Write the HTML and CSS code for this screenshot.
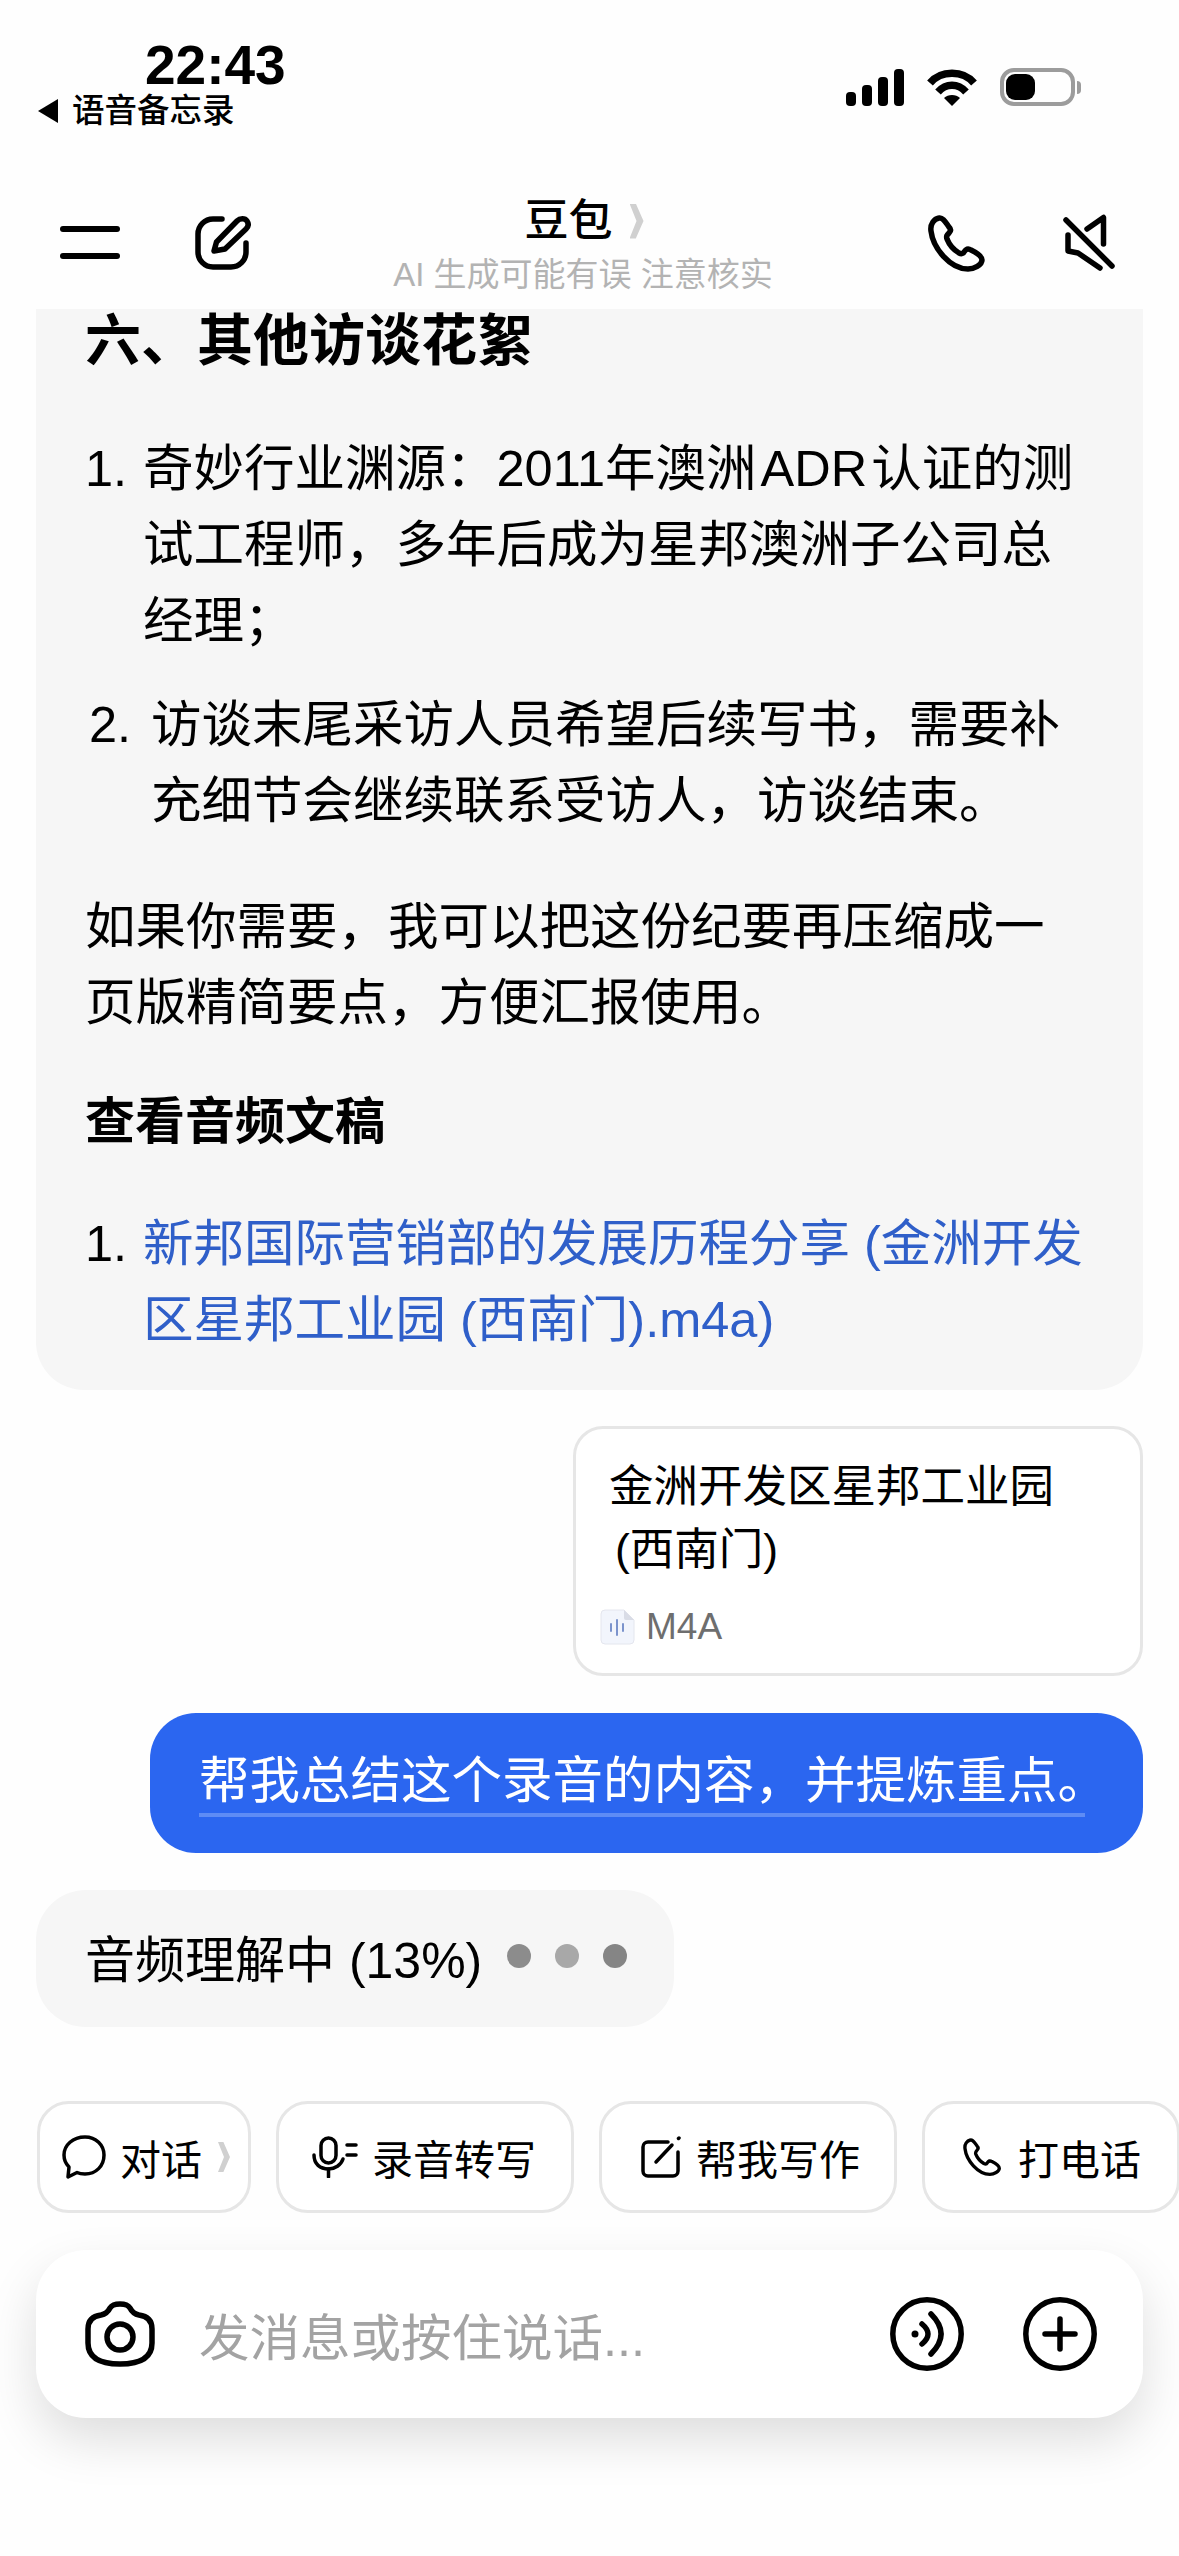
FILE: index.html
```html
<!DOCTYPE html>
<html lang="zh">
<head>
<meta charset="utf-8">
<title>豆包</title>
<link rel="stylesheet" href="styles.css">
</head>
<body>
<div class="app">
  <div class="status">
    <div class="status-left">
      <div class="time">22:43</div>
      <div class="back"><span class="back-tri"></span><span>语音备忘录</span></div>
    </div>
    <div class="status-right">
      <svg class="signal" width="58" height="37" viewBox="0 0 58 37"><rect x="0" y="23" width="10" height="14" rx="4"/><rect x="16" y="16" width="10" height="21" rx="4"/><rect x="32" y="8" width="10" height="29" rx="4"/><rect x="48" y="0" width="10" height="37" rx="4"/></svg>
      <svg class="wifi" width="50" height="37" viewBox="0 0 50 37"><path d="M3 14C14 1 36 1 47 14" fill="none" stroke="#000" stroke-width="7.500"/><path d="M11 23C19 14 31 14 39 23" fill="none" stroke="#000" stroke-width="7.500"/><path d="M25 37L17 29C21 25 29 25 33 29Z"/></svg>
      <div class="battery"><div class="battery-fill"></div></div>
      <div class="battery-nub"></div>
    </div>
  </div>

  <div class="nav">
    <div class="nav-left">
      <div class="menu"><span></span><span></span></div>
      <svg class="edit" width="56" height="54" viewBox="0 0 56 54" fill="none" stroke="#000" stroke-width="5.500" stroke-linejoin="round" stroke-linecap="round"><path d="M27 3H18A15 15 0 0 0 3 18V36A15 15 0 0 0 18 51H36A15 15 0 0 0 51 36V27"/><path d="M19 35L21.500 26L42 5C45 2 50 2 52 5C54 8 53 11 51 13L30 33Z"/></svg>
    </div>
    <div class="nav-center">
      <div class="title"><span>豆包</span><span class="chev"></span></div>
      <div class="sub">AI 生成可能有误 注意核实</div>
    </div>
    <div class="nav-right">
      <svg class="phone" width="58" height="58" viewBox="0 0 58 58" fill="none" stroke="#000" stroke-width="5.500" stroke-linejoin="round"><path d="M11 3C6 4 2 9 3 16C5 33 22 54 40 54C46 54 54 50 54 45C54 41 47 37 43 35C40 33 38 34 36 37C35 39 33 39 31 38C26 35 21 29 19 24C18 21 19 20 21 18C23 16 23 14 21 12C18 8 15 2 11 3Z"/></svg>
      <svg class="mute" width="52" height="58" viewBox="0 0 52 58" fill="none" stroke="#000" stroke-width="5.500" stroke-linejoin="round" stroke-linecap="round"><path d="M24 15L40.500 3.500V30" /><path d="M5 21V37L15 39L37 54"/><path d="M3 6L49 52"/></svg>
    </div>
  </div>

  <div class="thread">
    <div class="answer">
      <h2 class="h-first">六、其他访谈花絮</h2>
      <div class="li li-a"><span class="num">1.</span><p>奇妙行业渊源：2011年澳洲<span class="ltn">ADR</span>认证的测<br>试工程师，多年后成为星邦澳洲子公司总<br>经理；</p></div>
      <div class="li li-b"><span class="num">2.</span><p>访谈末尾采访人员希望后续写书，需要补<br>充细节会继续联系受访人，访谈结束。</p></div>
      <p class="para">如果你需要，我可以把这份纪要再压缩成一<br>页版精简要点，方便汇报使用。</p>
      <h3 class="h-sub">查看音频文稿</h3>
      <div class="li li-c"><span class="num">1.</span><p class="link">新邦国际营销部的发展历程分享 (金洲开发<br>区星邦工业园 (西南门).m4a)</p></div>
    </div>

    <div class="file">
      <div class="file-name">金洲开发区星邦工业园<br><span class="file-name-2">(西南门)</span></div>
      <div class="file-meta">
        <svg width="35" height="36" viewBox="0 0 35 36"><path d="M5 1H24L34 11V31A4 4 0 0 1 30 35H5A4 4 0 0 1 1 31V5A4 4 0 0 1 5 1Z" fill="#f2f5fc" stroke="#e4e6ee"/><path d="M24 1L34 11H26A2 2 0 0 1 24 9Z" fill="#d9dce6"/><path d="M11 15V22M17 11V26M23 15V22" stroke="#7b93cc" stroke-width="2" stroke-linecap="round"/></svg>
        <span>M4A</span>
      </div>
    </div>

    <div class="ask"><span class="ask-text">帮我总结这个录音的内容，并提炼重点。</span></div>

    <div class="progress">
      <span class="progress-text">音频理解中 (13%)</span>
      <span class="dots"><i class="d1"></i><i class="d2"></i><i class="d3"></i></span>
    </div>
  </div>

  <div class="chips">
    <div class="chip chip-1">
      <svg width="44" height="44" viewBox="0 0 44 44" fill="none" stroke="#000" stroke-width="3.500" stroke-linejoin="round"><path d="M23 2C11 2 2 10 2 20C2 25 4 29 7 32L6 42L15 37.500C17 38.500 20 39 23 39C34 39 42 31 42 20C42 10 34 2 23 2Z"/></svg>
      <span>对话</span><span class="chev chev-sm"></span>
    </div>
    <div class="chip chip-2">
      <svg width="46" height="42" viewBox="0 0 46 42" fill="none" stroke="#000" stroke-width="3.500" stroke-linecap="round"><rect x="9" y="2" width="15" height="25" rx="7.500"/><path d="M2 19C2 28 8 33 16.500 33C23 33 29 29 31 23"/><path d="M16.500 33V41"/><path d="M35 9H44M35 19H44"/></svg>
      <span>录音转写</span>
    </div>
    <div class="chip chip-3">
      <svg width="41" height="42" viewBox="0 0 41 42" fill="none" stroke="#000" stroke-width="3.500" stroke-linecap="round" stroke-linejoin="round"><path d="M28 6H8A5 5 0 0 0 3 11V35A5 5 0 0 0 8 40H33A5 5 0 0 0 38 35V16"/><path d="M16 26L32 9"/><path d="M39 2L38.500 2.500"/></svg>
      <span>帮我写作</span>
    </div>
    <div class="chip chip-4">
      <svg width="39" height="39" viewBox="0 0 58 58" fill="none" stroke="#000" stroke-width="5" stroke-linejoin="round"><path d="M11 3C6 4 2 9 3 16C5 33 22 54 40 54C46 54 54 50 54 45C54 41 47 37 43 35C40 33 38 34 36 37C35 39 33 39 31 38C26 35 21 29 19 24C18 21 19 20 21 18C23 16 23 14 21 12C18 8 15 2 11 3Z"/></svg>
      <span>打电话</span>
    </div>
  </div>

  <div class="input">
    <svg class="camera" width="70" height="66" viewBox="0 0 70 66" fill="none" stroke="#000" stroke-width="5.500" stroke-linejoin="round"><path d="M35 3C29 3 27 4 25 7C23 11 21 13 16 14C8 15 3 19 3 28V42C3 56 14 63 35 63C56 63 67 56 67 42V28C67 19 62 15 54 14C49 13 47 11 45 7C43 4 41 3 35 3Z"/><circle cx="35" cy="36" r="13"/></svg>
    <div class="placeholder">发消息或按住说话...</div>
    <svg class="round" width="74" height="74" viewBox="0 0 74 74" fill="none" stroke="#000" stroke-width="5.500" stroke-linecap="round"><circle cx="37" cy="37" r="34.200"/><circle cx="25" cy="37" r="3.500" fill="#000" stroke="none"/><path d="M32 27Q44 37 32 47"/><path d="M41 17Q61 37 41 57"/></svg>
    <svg class="round" width="74" height="74" viewBox="0 0 74 74" fill="none" stroke="#000" stroke-width="5.500" stroke-linecap="round"><circle cx="37" cy="37" r="34.200"/><path d="M37 22V52M22 37H52"/></svg>
  </div>
</div>
</body>
</html>
```
FILE: styles.css
```css
* { box-sizing: border-box; }
html, body { margin: 0; padding: 0; background: #fff; }
body { font-family: "Liberation Sans", "Noto Sans CJK SC", sans-serif; color: #000; }
p, h2, h3 { margin: 0; }
.app { width: 1179px; height: 2556px; overflow: hidden; display: flex; flex-direction: column; background: #fefefe; }

.status { height: 190px; padding: 38px 98px 0 38px; display: flex; justify-content: space-between; align-items: flex-start; flex: none; }
.status-left { display: flex; flex-direction: column; }
.time { font-weight: 700; font-size: 55px; line-height: 54px; margin-left: 107px; }
.back { display: flex; align-items: center; gap: 14px; font-size: 32.5px; line-height: 40px; font-weight: 500; margin-top: -1px; }
.back-tri { width: 0; height: 0; border-right: 20px solid #000; border-top: 12px solid transparent; border-bottom: 12px solid transparent; }
.status-right { display: flex; align-items: center; margin-top: 30px; }
.wifi { margin-left: 23px; }
.battery { margin-left: 23px; width: 75px; height: 38px; border: 4px solid #9c9c9c; border-radius: 14px; padding: 2px; }
.battery-fill { width: 29px; height: 100%; background: #000; border-radius: 9px; }
.battery-nub { width: 4px; height: 13px; background: #9c9c9c; border-radius: 0 4px 4px 0; margin-left: 2px; }

.nav { height: 119px; flex: none; position: relative; display: flex; justify-content: space-between; padding: 24px 64px 0 60px; }
.nav-left { display: flex; gap: 75px; align-items: flex-start; }
.menu { width: 60px; height: 33px; margin-top: 12px; display: flex; flex-direction: column; justify-content: space-between; }
.menu span { height: 6px; background: #000; border-radius: 3px; }
.edit { margin-top: 2px; }
.nav-center { position: absolute; left: 395px; top: 0; width: 376px; display: flex; flex-direction: column; align-items: center; }
.title { font-size: 44px; line-height: 56px; font-weight: 500; display: flex; align-items: center; gap: 17px; margin: 3px 0 0 2px; }
.chev { display: inline-block; width: 14px; height: 35px; background: #d0d0d0; clip-path: polygon(0 0, 45% 0, 100% 50%, 45% 100%, 0 100%, 50% 50%); }
.sub { font-size: 33px; line-height: 40px; color: #b3b3b3; margin-top: 6px; white-space: nowrap; }
.nav-right { display: flex; gap: 77px; align-items: flex-start; }
.phone { margin-top: 1px; }

.thread { flex: none; padding: 0 36px; display: flex; flex-direction: column; align-items: flex-end; }
.answer { width: 1107px; height: 1081px; background: #f6f6f6; border-radius: 0 0 48px 48px; padding: 0 49px; font-size: 50.5px; line-height: 76px; }
.h-first { font-size: 56px; line-height: 64px; font-weight: 700; }
.h-sub { font-size: 50px; line-height: 76px; font-weight: 700; margin-top: 43px; }
.li { display: flex; }
.li-a { margin-top: 58px; }
.li-a .num, .li-c .num { width: 58px; flex: none; }
.li-b { margin-top: 28px; padding-left: 4px; }
.li-b .num { width: 62px; flex: none; }
.li-c { margin-top: 46px; }
.para { margin-top: 50px; }
.link { color: #2f5fc9; }
.ltn { margin: 0 4px; }

.file { width: 570px; height: 250px; margin-top: 36px; border: 3px solid #e6e6e6; border-radius: 30px; background: #fff; padding: 26px 24px 0 24px; }
.file-name { font-size: 44.5px; line-height: 63px; padding-left: 9px; }
.file-name-2 { margin-left: 6px; }
.file-meta { display: flex; align-items: center; gap: 11px; font-size: 37px; line-height: 40px; color: #6e6e6e; margin-top: 26px; }

.ask { width: 993px; height: 140px; margin-top: 37px; background: #2b66f0; border-radius: 46px; padding: 39px 0 0 49px; color: #fff; font-size: 50.5px; line-height: 58px; }
.ask-text { display: inline-block; border-bottom: 4px solid #5e8cf5; height: 65px; width: 886px; white-space: nowrap; }

.progress { align-self: flex-start; width: 638px; height: 137px; margin-top: 37px; background: #f6f6f6; border-radius: 50px; display: flex; align-items: center; padding: 0 0 6px 49px; font-size: 50px; }
.progress-text { white-space: nowrap; }
.dots { display: flex; gap: 24px; margin-left: 25px; }
.dots i { width: 24px; height: 24px; border-radius: 50%; }
.d1 { background: #8c8c8c; }
.d2 { background: #a8a8a8; }
.d3 { background: #858585; }

.chips { height: 112px; flex: none; margin-top: 74px; padding-left: 37px; display: flex; gap: 25px; }
.chip { flex: none; height: 112px; border: 3px solid #e6e6e6; border-radius: 32px; background: #fff; display: flex; align-items: center; font-size: 41px; white-space: nowrap; }
.chip-1 { width: 214px; padding-left: 22px; gap: 14px; }
.chip-2 { width: 298px; padding-left: 33px; gap: 14px; }
.chip-3 { width: 298px; padding-left: 38px; gap: 15px; }
.chip-4 { width: 258px; padding-left: 38px; gap: 16px; }
.chev-sm { width: 12px; height: 30px; margin-left: 2px; }

.input { flex: none; width: 1107px; height: 168px; margin: 37px 0 0 36px; background: #fff; border-radius: 50px; box-shadow: 0 22px 50px rgba(0,0,0,.13); display: flex; align-items: center; padding: 0 46px 0 49px; }
.placeholder { flex: 1; margin-left: 44px; font-size: 50.5px; color: #a3a3a3; white-space: nowrap; }
.round + .round { margin-left: 59px; }
```
